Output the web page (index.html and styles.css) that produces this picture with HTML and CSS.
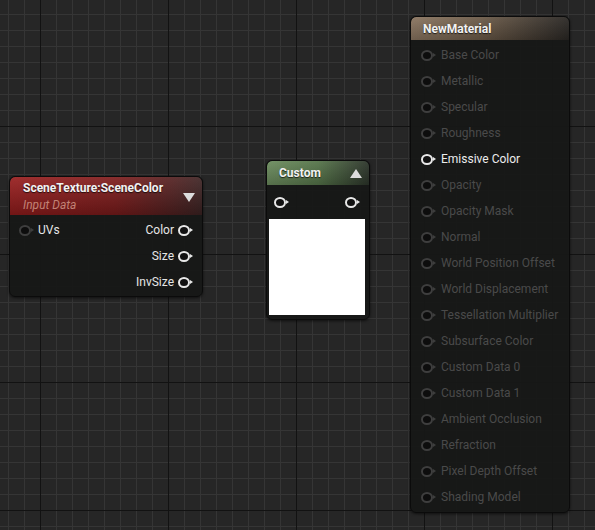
FILE: index.html
```html
<!DOCTYPE html>
<html lang="en">

<head>
    <meta charset="UTF-8">
    <title>Material Graph</title>
    <link rel="stylesheet" href="styles.css">
</head>

<body>
    <div class="graph">
        <!-- SceneTexture node -->
        <div class="node scene-node">
            <div class="node-header red">
                <div class="titles">
                    <div class="node-title">SceneTexture:SceneColor</div>
                    <div class="node-sub">Input Data</div>
                </div>
                <span class="arrow down"></span>
            </div>
            <div class="node-body">
                <div class="row">
                    <div class="pin-in"><span class="pin off"></span><span class="label">UVs</span></div>
                    <div class="pin-out"><span class="label">Color</span><span class="pin"></span></div>
                </div>
                <div class="row right">
                    <div class="pin-out"><span class="label">Size</span><span class="pin"></span></div>
                </div>
                <div class="row right">
                    <div class="pin-out"><span class="label">InvSize</span><span class="pin"></span></div>
                </div>
            </div>
        </div>

        <!-- Custom node -->
        <div class="node custom-node">
            <div class="node-header green">
                <div class="node-title">Custom</div>
                <span class="arrow up"></span>
            </div>
            <div class="node-body">
                <div class="row pins-only">
                    <span class="pin"></span>
                    <span class="pin"></span>
                </div>
                <div class="preview"></div>
            </div>
        </div>

        <!-- Material result node -->
        <div class="node material-node">
            <div class="node-header tan">
                <div class="node-title">NewMaterial</div>
            </div>
            <div class="node-body inputs">
                <div class="input dim"><span class="pin off"></span>Base Color</div>
                <div class="input dim"><span class="pin off"></span>Metallic</div>
                <div class="input dim"><span class="pin off"></span>Specular</div>
                <div class="input dim"><span class="pin off"></span>Roughness</div>
                <div class="input"><span class="pin"></span>Emissive Color</div>
                <div class="input dim"><span class="pin off"></span>Opacity</div>
                <div class="input dim"><span class="pin off"></span>Opacity Mask</div>
                <div class="input dim"><span class="pin off"></span>Normal</div>
                <div class="input dim"><span class="pin off"></span>World Position Offset</div>
                <div class="input dim"><span class="pin off"></span>World Displacement</div>
                <div class="input dim"><span class="pin off"></span>Tessellation Multiplier</div>
                <div class="input dim"><span class="pin off"></span>Subsurface Color</div>
                <div class="input dim"><span class="pin off"></span>Custom Data 0</div>
                <div class="input dim"><span class="pin off"></span>Custom Data 1</div>
                <div class="input dim"><span class="pin off"></span>Ambient Occlusion</div>
                <div class="input dim"><span class="pin off"></span>Refraction</div>
                <div class="input dim"><span class="pin off"></span>Pixel Depth Offset</div>
                <div class="input dim"><span class="pin off"></span>Shading Model</div>
            </div>
        </div>
    </div>
</body>

</html>
```

FILE: styles.css
```css
/* Canvas */
body {
    margin: 0;
    padding: 0;
    font-family: Roboto, 'Liberation Sans', sans-serif;
    font-size: 12px;
    color: #e6e6e6;
}

.graph {
    position: relative;
    width: 595px;
    height: 530px;
    overflow: hidden;
    background-color: #262626;
    background-image:
        linear-gradient(to right, #121212 1px, transparent 1px),
        linear-gradient(to bottom, #121212 1px, transparent 1px),
        linear-gradient(to right, #353535 1px, transparent 1px),
        linear-gradient(to bottom, #353535 1px, transparent 1px);
    background-size: 128px 128px, 128px 128px, 16px 16px, 16px 16px;
    background-position: 40px 0, 0 126px, 8px 0, 0 14px;
}

/* Nodes */
.node {
    position: absolute;
    box-sizing: border-box;
    background: rgba(22, 23, 22, 0.94);
    border: 1px solid #0b0b0b;
    border-radius: 6px;
    box-shadow: 0 1px 3px rgba(0, 0, 0, 0.6);
    overflow: hidden;
}

.scene-node {
    left: 9px;
    top: 176px;
    width: 194px;
    height: 121px;
}

.custom-node {
    left: 266px;
    top: 160px;
    width: 104px;
    height: 160px;
}

.material-node {
    left: 410px;
    top: 16px;
    width: 160px;
    height: 497px;
}

.node-header {
    display: flex;
    align-items: center;
    justify-content: space-between;
    padding: 0 0 0 12px;
    border-radius: 5px 5px 0 0;
}

.node-title {
    font-weight: bold;
    color: #f2f2f2;
    text-shadow: 0 1px 1px rgba(0, 0, 0, 0.7);
}

.node-sub {
    font-style: italic;
    color: #c28275;
    margin-top: 3px;
}

.red {
    height: 38px;
    padding-left: 13px;
    background:
        linear-gradient(to bottom, rgba(255, 255, 255, 0.08), rgba(0, 0, 0, 0.25)),
        linear-gradient(to right, #981d1d 0%, #7e1c1c 55%, #3e2424 100%);
}

.green {
    height: 24px;
    padding-left: 12px;
    background:
        linear-gradient(to bottom, rgba(255, 255, 255, 0.06), rgba(0, 0, 0, 0.2)),
        linear-gradient(to right, #6c8c5e 0%, #56754a 50%, #2c342a 100%);
}

.tan {
    height: 23px;
    padding-left: 12px;
    background:
        linear-gradient(to bottom, rgba(255, 255, 255, 0.06), rgba(0, 0, 0, 0.2)),
        linear-gradient(to right, #8a7560 0%, #6b5a48 45%, #2a2724 100%);
}

.arrow {
    width: 0;
    height: 0;
    margin-right: 7px;
    border-left: 6px solid transparent;
    border-right: 6px solid transparent;
}

.arrow.down {
    border-top: 9px solid #dcdcdc;
    margin-top: 2px;
}

.arrow.up {
    border-bottom: 9px solid #dcdcdc;
}

/* Rows and pins */
.node-body {
    padding-top: 2px;
}

.row {
    display: flex;
    justify-content: space-between;
    align-items: center;
    height: 26px;
    padding: 0 8px 0 9px;
}

.row.right {
    justify-content: flex-end;
}

.pin-in,
.pin-out {
    display: flex;
    align-items: center;
}

.pin-in {
    gap: 3px;
}

.pin-out {
    gap: 4px;
}

.pin {
    position: relative;
    display: inline-block;
    width: 8px;
    height: 7px;
    border: 2px solid #e8e8e8;
    border-radius: 50%;
    background: #111;
    margin-right: 4px;
}

.pin::after {
    content: '';
    position: absolute;
    left: 10px;
    top: 1px;
    border-top: 2.5px solid transparent;
    border-bottom: 2.5px solid transparent;
    border-left: 3px solid #e8e8e8;
}

.pin.off {
    border-color: #3e3e3e;
    background: #0d0d0d;
}

.pin.off::after {
    border-left-color: #3e3e3e;
}

.pins-only {
    height: 30px;
    padding: 0 8px 0 7px;
}

.preview {
    margin: 2px 4px 0 2px;
    height: 96px;
    background: #fff;
}

.inputs {
    padding-top: 2px;
}

.input {
    display: flex;
    align-items: center;
    gap: 4px;
    height: 26px;
    padding-left: 10px;
    color: #ececec;
}

.input.dim {
    color: #4a4a4a;
}
```
